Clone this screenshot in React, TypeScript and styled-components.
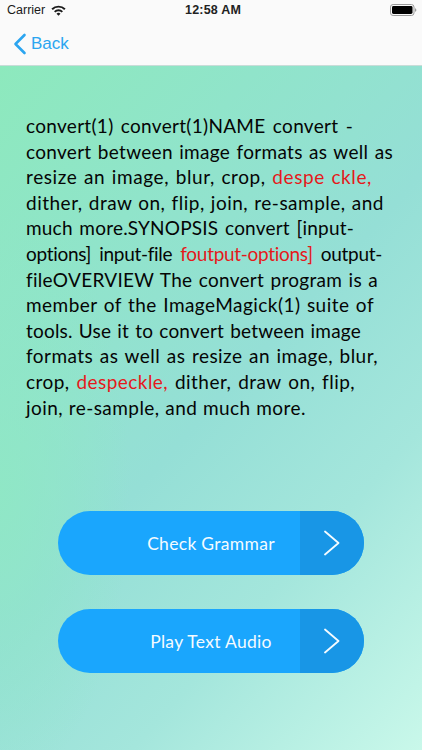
import React from "react";
import styled, { createGlobalStyle } from "styled-components";

const Global = createGlobalStyle`
  html, body { margin: 0; padding: 0; width: 422px; height: 750px; overflow: hidden; }
  #root { width: 422px; height: 750px; }
`;

const Screen = styled.div`
  width: 422px;
  height: 750px;
  display: flex;
  flex-direction: column;
  font-family: "Lato", "Liberation Sans", sans-serif;
`;

const Header = styled.header`
  height: 65px;
  flex: none;
  background: #fafafa;
  border-bottom: 1px solid #c9dcd8;
  display: flex;
  flex-direction: column;
`;

const StatusBar = styled.div`
  height: 20px;
  padding: 0 5px 0 7px;
  display: grid;
  grid-template-columns: 1fr auto 1fr;
  align-items: center;
  font-family: "Liberation Sans", sans-serif;
  font-size: 12.5px;
  color: #1a1a1a;
`;

const StatusLeft = styled.div`
  display: flex;
  align-items: center;
  gap: 6px;
`;

const Clock = styled.div`
  font-weight: 700;
  font-size: 12.5px;
  letter-spacing: 0.2px;
  color: #222;
  padding-left: 2px;
`;

const StatusRight = styled.div`
  display: flex;
  justify-content: flex-end;
  align-items: center;
`;

const Nav = styled.nav`
  flex: 1;
  display: flex;
  align-items: center;
  padding: 2px 0 0 13px;
  gap: 4px;
  color: #2ba5f0;
  font-family: "Liberation Sans", sans-serif;
  font-size: 17px;
`;

const Content = styled.main`
  flex: 1;
  display: flex;
  flex-direction: column;
  align-items: center;
  background:
    radial-gradient(ellipse 130px 300px at 0% 62%, rgba(143, 232, 196, 0.85) 0%, rgba(143, 232, 196, 0) 100%),
    linear-gradient(132deg, #8de9bd 0%, #90e4ca 25%, #95dfd6 50%, #a4e6dc 72%, #c9f8ea 100%);
`;

const Body = styled.div`
  margin: 47px 0 0;
  width: 422px;
  box-sizing: border-box;
  padding-left: 26px;
  font-size: 19px;
  line-height: 25.6px;
  color: #050505;
`;

const Line = styled.div<{ $w: number; $ls?: number }>`
  width: ${(p) => p.$w}px;
  letter-spacing: ${(p) => p.$ls ?? 0.3}px;
  text-align: justify;
  text-align-last: justify;
`;

const Flag = styled.span`
  color: #e5191b;
`;

const Actions = styled.div`
  margin-top: 91px;
  display: flex;
  flex-direction: column;
  gap: 34px;
`;

const ActionButton = styled.button`
  position: relative;
  width: 306px;
  height: 64px;
  padding: 0;
  border: none;
  border-radius: 32px;
  overflow: hidden;
  background: #1aa6fd;
  color: #f4fbff;
  font-family: "Lato", "Liberation Sans", sans-serif;
  font-size: 17.5px;
  letter-spacing: 0.3px;
  text-align: center;
`;

const Arrow = styled.span`
  position: absolute;
  top: 0;
  right: 0;
  bottom: 0;
  width: 64px;
  background: #1896e6;
  display: flex;
  align-items: center;
  justify-content: center;
`;

const StatusWifi = () => (
  <svg width="15" height="11" viewBox="0 0 15 11" aria-hidden>
    <path d="M0.4 3.6A10 10 0 0 1 14.6 3.6L13.2 5A8 8 0 0 0 1.8 5Z M3 6.2A6.3 6.3 0 0 1 12 6.2L10.6 7.6A4.3 4.3 0 0 0 4.4 7.6Z M5.5 8.7A2.8 2.8 0 0 1 9.5 8.7L7.5 10.8Z" fill="#1a1a1a" />
  </svg>
);

const Battery = () => (
  <svg width="27" height="12" viewBox="0 0 27 12" aria-hidden>
    <rect x="0.5" y="0.5" width="23.5" height="11" rx="2.6" fill="none" stroke="#9a9a9a" />
    <rect x="2" y="2" width="20.5" height="8" rx="1.4" fill="#000" />
    <path d="M25 4.2c.9.2 1.3.9 1.3 1.8s-.4 1.6-1.3 1.8Z" fill="#9a9a9a" />
  </svg>
);

const BackChevron = () => (
  <svg width="14" height="22" viewBox="0 0 14 22" aria-hidden>
    <path d="M11.5 2 2.5 11l9 9" fill="none" stroke="#2ba5f0" strokeWidth="2.6" strokeLinecap="round" strokeLinejoin="round" />
  </svg>
);

const NextChevron = () => (
  <svg width="16" height="26" viewBox="0 0 16 26" aria-hidden>
    <path d="M1 1.5 14.5 13 1 24.5" fill="none" stroke="#f4fbff" strokeWidth="1.8" strokeLinecap="round" strokeLinejoin="round" />
  </svg>
);

export default function App() {
  return (
    <Screen>
      <Global />
      <Header>
        <StatusBar>
          <StatusLeft>
            <span>Carrier</span>
            <StatusWifi />
          </StatusLeft>
          <Clock>12:58 AM</Clock>
          <StatusRight>
            <Battery />
          </StatusRight>
        </StatusBar>
        <Nav>
          <BackChevron />
          <span>Back</span>
        </Nav>
      </Header>
      <Content>
        <Body>
          <Line $w={327} $ls={0.3}>convert(1) convert(1)NAME convert -</Line>
          <Line $w={367}>convert between image formats as well as</Line>
          <Line $w={346} $ls={0.6}>resize an image, blur, crop, <Flag>despe ckle,</Flag></Line>
          <Line $w={358} $ls={0.5}>dither, draw on, flip, join, re-sample, and</Line>
          <Line $w={328} $ls={0.2}>much more.SYNOPSIS convert [input-</Line>
          <Line $w={356} $ls={-0.3}>options] input-file <Flag>foutput-options]</Flag> output-</Line>
          <Line $w={352}>fileOVERVIEW The convert program is a</Line>
          <Line $w={348} $ls={0.45}>member of the ImageMagick(1) suite of</Line>
          <Line $w={335} $ls={0.2}>tools. Use it to convert between image</Line>
          <Line $w={352} $ls={0.45}>formats as well as resize an image, blur,</Line>
          <Line $w={329} $ls={0.45}>crop, <Flag>despeckle,</Flag> dither, draw on, flip,</Line>
          <Line $w={280} $ls={0.45}>join, re-sample, and much more.</Line>
        </Body>
        <Actions>
          <ActionButton>
            Check Grammar
            <Arrow><NextChevron /></Arrow>
          </ActionButton>
          <ActionButton>
            Play Text Audio
            <Arrow><NextChevron /></Arrow>
          </ActionButton>
        </Actions>
      </Content>
    </Screen>
  );
}
